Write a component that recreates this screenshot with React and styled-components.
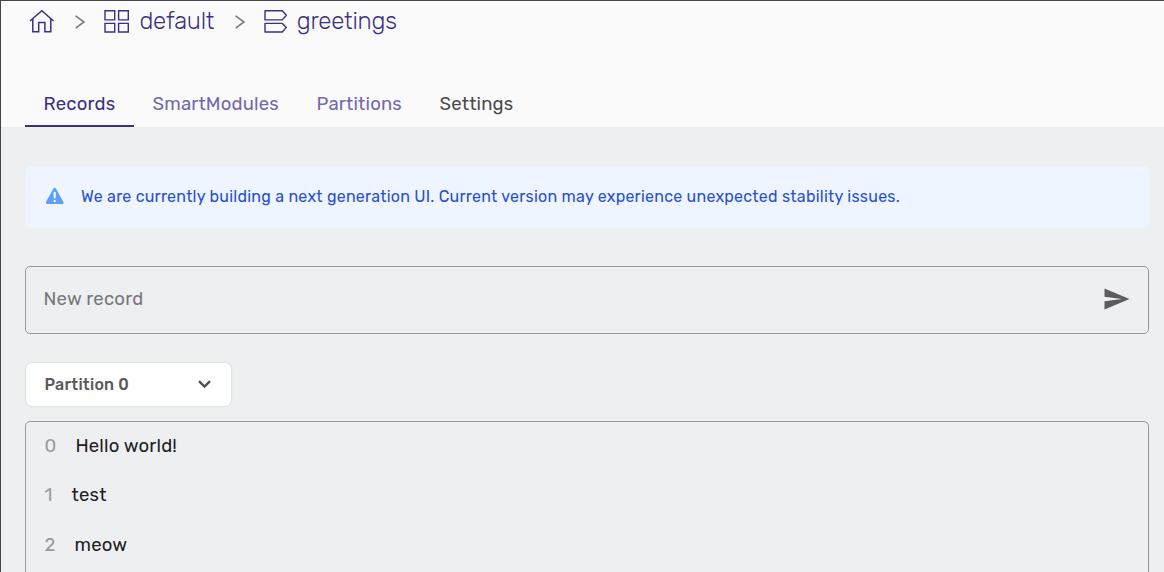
import React from "react";
import styled, { createGlobalStyle } from "styled-components";

const GlobalStyle = createGlobalStyle`
  *, *::before, *::after { box-sizing: border-box; }
  body {
    margin: 0;
    background: #eeeff1;
    font-family: Rubik, Roboto, "Liberation Sans", sans-serif;
    overflow: hidden;
  }
`;

const Page = styled.div`
  height: 572px;
  border-top: 1px solid #47454a;
  border-left: 1px solid #47454a;
  background: #eeeff1;
  overflow: hidden;
`;

const Header = styled.header`
  height: 126px;
  padding-left: 24px;
  background: #fafafa;
  display: flex;
  flex-direction: column;
  justify-content: space-between;
`;

const Breadcrumb = styled.nav`
  display: flex;
  align-items: center;
  height: 40px;
  padding-left: 3px;
  color: #3d3080;
`;

const Crumb = styled.a`
  display: flex;
  align-items: center;
  gap: 9px;
  font-size: 24px;
  font-weight: 300;
  line-height: 40px;
  letter-spacing: -0.2px;
  svg { display: block; }
`;

const Separator = styled.svg`
  display: block;
  margin: 1px 18px 0 20.4px;
`;

const Tabs = styled.nav`
  display: flex;
  height: 47px;
`;

const Tab = styled.a`
  width: ${(p) => p.$width}px;
  padding: 1px 0 0 18.6px;
  color: ${(p) => p.$color};
  font-size: 18.5px;
  line-height: 47px;
  height: 47px;
  letter-spacing: 0.17px;
  white-space: nowrap;
  border-bottom: 2px solid ${(p) => (p.$active ? "#3d3080" : "transparent")};
`;

const Content = styled.main`
  display: flex;
  flex-direction: column;
  align-items: stretch;
  padding: 39px 15px 0 24px;
`;

const Banner = styled.div`
  display: flex;
  align-items: center;
  gap: 17px;
  height: 62px;
  padding: 0 0 2px 20px;
  border-radius: 6px;
  background: #eef5ff;
  color: #2850d0;
  font-size: 16px;
  letter-spacing: 0.24px;
`;

const RecordField = styled.div`
  display: flex;
  align-items: center;
  justify-content: space-between;
  height: 68px;
  margin-top: 38px;
  padding: 0 18px 2px 17.5px;
  border: 1px solid #97989b;
  border-radius: 5px;
  color: #77777a;
  font-size: 18.5px;
  letter-spacing: 0.22px;
`;

const PartitionSelect = styled.button`
  display: flex;
  align-items: center;
  justify-content: space-between;
  width: 205px;
  height: 43px;
  margin: 29px 0 0 1px;
  padding: 0 20px 1px 18.5px;
  border: 0;
  border-radius: 6px;
  background: #fff;
  box-shadow: 0 0 2px rgba(0, 0, 0, 0.18);
  color: #59595b;
  font-family: inherit;
  font-size: 16px;
  font-weight: 500;
  letter-spacing: 0.22px;
`;

const RecordList = styled.ul`
  height: 180px;
  margin: 15px 0 0;
  padding: 0 0 0 18.5px;
  border: 1px solid #97989b;
  border-radius: 5px;
  list-style: none;
`;

const Record = styled.li`
  display: flex;
  gap: 19.2px;
  height: 49.4px;
  line-height: 48px;
  font-size: 18.5px;
  letter-spacing: 0.17px;
  color: #202024;
`;

const Offset = styled.span`
  color: #9b9b9d;
  letter-spacing: 0;
`;

const HomeIcon = () => (
  <svg width="27" height="26" viewBox="0 0 27 26" fill="none" stroke="#3d3080" strokeWidth="1.5">
    <path d="M2 13 13.8 2.7 25.6 13M4.8 11v12.7h5.9v-9.2h6.2v9.2h5.9V11" />
  </svg>
);

const GridIcon = () => (
  <svg width="27" height="26" viewBox="0 0 27 26" fill="none" stroke="#3d3080" strokeWidth="1.4">
    <path d="M2 2.7h9.7v9.2H2zM15.6 2.7h9.7v9.2h-9.7zM2 15.4h9.7v8.6H2zM15.6 15.4h9.7v8.6h-9.7z" />
  </svg>
);

const TopicIcon = () => (
  <svg width="25" height="26" viewBox="0 0 25 26" fill="none" stroke="#3d3080" strokeWidth="1.4" strokeLinejoin="round">
    <path d="M2 2.7h17.3l4 4.5-4 4.7H2zM2 15.4h17.3l4 4-4 4.6H2z" />
  </svg>
);

const CrumbSeparator = () => (
  <Separator width="10" height="14" viewBox="0 0 10 14" fill="none" stroke="#7b7b7e" strokeWidth="1.6">
    <path d="M.6 .9 9 7 .6 13.1" />
  </Separator>
);

const WarningIcon = () => (
  <svg width="19" height="18" viewBox="0 0 19 18">
    <path d="M9.7 2.4 17 15.6H2.4z" fill="#5ea0f6" stroke="#5ea0f6" strokeWidth="3" strokeLinejoin="round" />
    <path d="M9.7 5.8v4.6" stroke="#edf5ff" strokeWidth="2.2" strokeLinecap="round" />
    <circle cx="9.7" cy="14" r="1.2" fill="#edf5ff" />
  </svg>
);

const SendIcon = () => (
  <svg width="26" height="22" viewBox="0 0 26 22">
    <path d="M.5 .5 25.5 11 .5 21.5v-8.2L18 11 .5 8.7z" fill="#5c5c5e" />
  </svg>
);

const ChevronIcon = () => (
  <svg width="13" height="9" viewBox="0 0 13 9" fill="none" stroke="#505052" strokeWidth="2.4">
    <path d="m1 1.2 5.5 5.3L12 1.2" />
  </svg>
);

const tabs = [
  { label: "Records", width: 109, color: "#3d3080", active: true },
  { label: "SmartModules", width: 164, color: "#7269aa" },
  { label: "Partitions", width: 123, color: "#7269aa" },
  { label: "Settings", width: 112, color: "#4a4a4c" },
];

const records = ["Hello world!", "test", "meow"];

export default function App() {
  return (
    <>
      <GlobalStyle />
      <Page>
        <Header>
          <Breadcrumb>
            <Crumb><HomeIcon /></Crumb>
            <CrumbSeparator />
            <Crumb><GridIcon />default</Crumb>
            <CrumbSeparator />
            <Crumb><TopicIcon />greetings</Crumb>
          </Breadcrumb>
          <Tabs>
            {tabs.map((t) => (
              <Tab key={t.label} $width={t.width} $color={t.color} $active={t.active}>
                {t.label}
              </Tab>
            ))}
          </Tabs>
        </Header>
        <Content>
          <Banner>
            <WarningIcon />
            <span>We are currently building a next generation UI. Current version may experience unexpected stability issues.</span>
          </Banner>
          <RecordField>
            <span>New record</span>
            <SendIcon />
          </RecordField>
          <PartitionSelect>
            <span>Partition 0</span>
            <ChevronIcon />
          </PartitionSelect>
          <RecordList>
            {records.map((text, i) => (
              <Record key={text}>
                <Offset>{i}</Offset>
                <span>{text}</span>
              </Record>
            ))}
          </RecordList>
        </Content>
      </Page>
    </>
  );
}
